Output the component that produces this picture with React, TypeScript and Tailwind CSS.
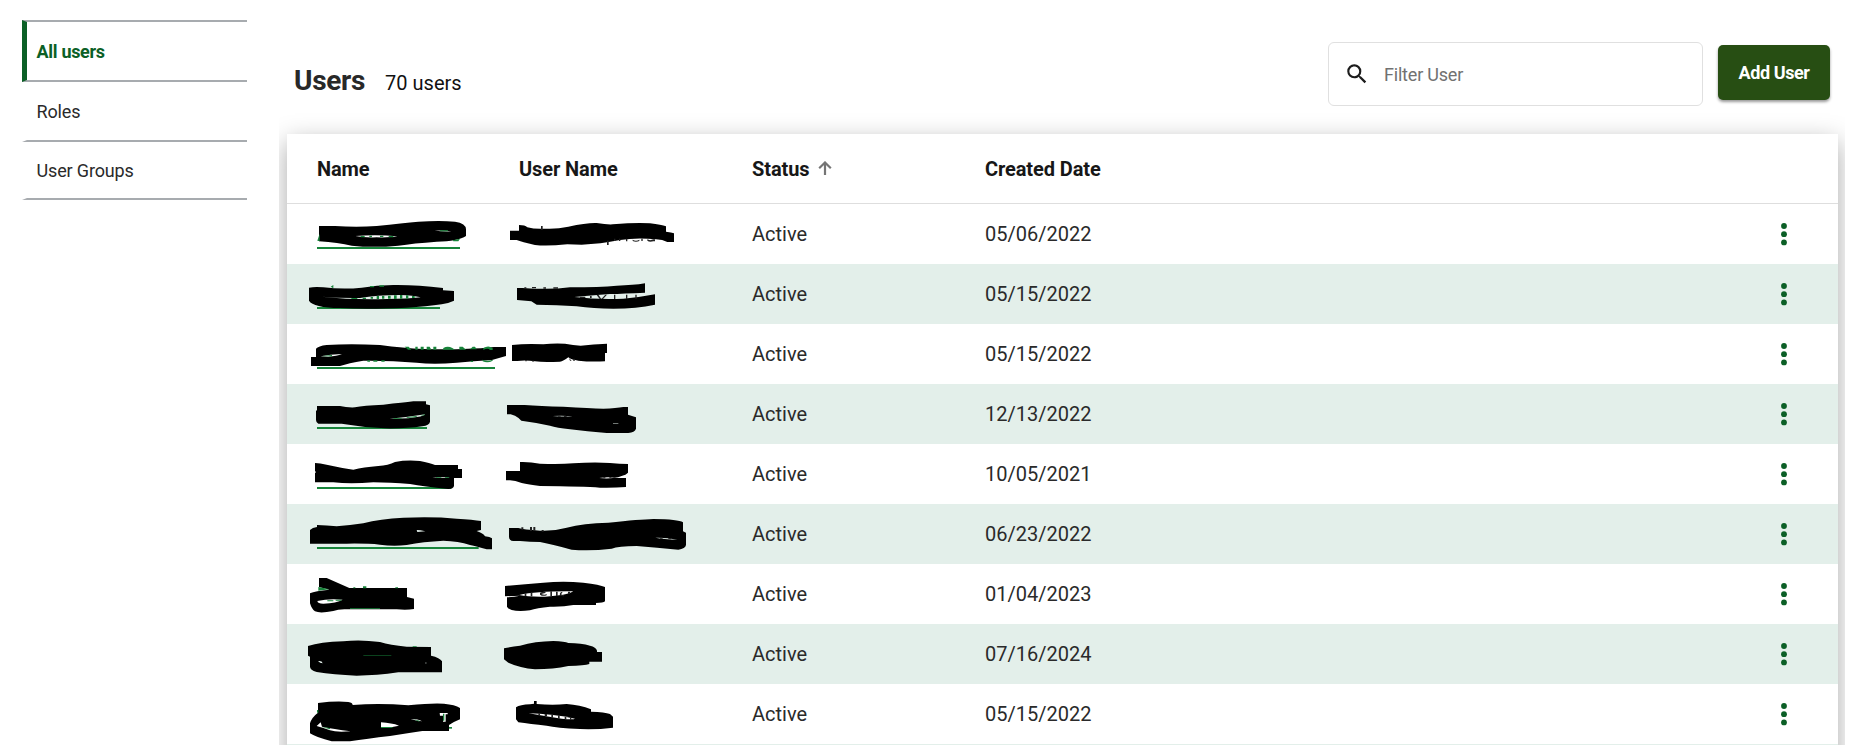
import React from "react";

type Row = {
  date: string;
  offset: number;
  underline: string;
  name: string;
  user: string;
  nameGaps: string;
  userGaps: string;
  tint: string;
  dark: string;
};

// Coordinates use three units per pixel; offset is the top edge of each row.
const rows: Row[] = [
  {
    date: "05/06/2022", offset: 12, underline: "M81 141H510V147H81Z",
    name: "M87 78H135Q200 83 260 78Q340 69 385 65Q450 61 495 65Q528 70 528 88V108Q505 124 440 125Q370 130 325 137Q250 144 185 137Q145 128 87 124Z",
    user: "M660 92H687V75Q705 75 712 82Q735 88 765 86Q800 88 835 80Q890 68 920 69Q950 74 968 73Q1040 67 1080 70Q1115 75 1128 79V95Q1145 97 1152 100V126H1132Q1118 118 1098 118Q1040 112 990 120Q930 132 875 134L832 133Q770 139 735 135Q695 126 680 120H660Z",
    nameGaps: "M196 108Q260 103 322 109Q300 113 260 112Q220 113 196 108ZM434 92Q460 90 484 94Q462 95 434 92Z",
    userGaps: "",
    tint: "M82 122L89 101V124ZM212 108h12v4h-12ZM238 107h8v4h-8ZM270 107h10v4h-10ZM296 108h14v4h-14ZM450 91h24v3h-24ZM488 121L510 116L505 124H490Z",
    dark: "M753 78h5v12h-5ZM951 122h5v13h-5ZM972 116h4v7h-4ZM987 116h4v7h-4ZM1008 116h4v8h-4ZM1028 119q10 6 20 0v4q-10 5-20 0ZM1054 116h4v7h-4ZM1072 118q8 5 18 0h5v6h-5q-12 3-18-2Z",
  },
  {
    date: "05/15/2022", offset: 192, underline: "M81 321H450V327H81Z",
    name: "M57 263Q75 259 100 262Q160 269 215 263Q260 256 310 255Q380 254 459 264V271L492 273V302Q475 310 455 313Q410 320 350 323Q230 329 150 324Q70 323 57 302Z",
    user: "M681 264H698Q780 270 840 262Q930 262 980 257Q1030 256 1065 250V278Q1000 281 960 282Q900 286 853 291Q930 300 1000 296Q1050 292 1095 283V314Q1040 326 970 326Q910 326 860 319Q800 314 740 314L724 304L681 300Z",
    nameGaps: "M94 290Q150 295 210 294Q260 285 330 285Q370 286 392 292Q350 297 290 297Q190 300 94 290Z",
    userGaps: "",
    tint: "M122 260L130 255V265ZM240 258h12v4h-12ZM268 256h14v4h-14ZM184 294h18v3h-18ZM218 293h10v4h-10ZM242 291h7v5h-7ZM260 288h7v9h-7ZM276 288h7v8h-7ZM294 287h8v9h-8ZM312 286h8v11h-8ZM330 285h7v11h-7ZM348 286h7v10h-7ZM366 288h8v6h-8Z",
    dark: "M703 262h6v4h-6ZM726 261h12v4h-12ZM760 262h8v4h-8ZM790 262h14v4h-14ZM870 290h16v4h-16ZM900 288h5v6h-5ZM920 285h6l8 12h-5ZM946 284h5l-12 13h-5ZM972 284h4v13h-4ZM1008 284h4v13h-4ZM1036 284h4v12h-4Z",
  },
  {
    date: "05/15/2022", offset: -18, underline: "M81 111H615V117H81Z",
    name: "M78 56Q85 48 110 45Q180 40 270 45Q340 54 400 57Q480 59 520 57Q580 55 612 51H648V78L606 90Q550 93 500 98Q430 104 380 98Q300 91 220 92Q175 99 150 108H63V81H78Z",
    user: "M666 45Q710 40 760 43Q790 39 825 41Q850 46 872 47Q910 43 951 41V69H945V94Q900 96 865 92Q845 90 835 82Q820 94 810 95Q760 98 735 94Q705 89 682 93H666Z",
    nameGaps: "M92 79Q120 73 156 72Q140 79 115 80Z",
    userGaps: "",
    tint: "M98 78l28-3v4h-28ZM344 50h12l8 9h-10ZM376 50h7v9h-7ZM392 50h9v9h-9ZM410 50h9l5 9h-14ZM430 50h9v9h-9ZM460 54q13-8 27 0l8 5h-36ZM508 50h10l10 9h-20ZM542 56l6-6h7l5 8h-20ZM580 54q15-9 28 0v6h-8q-6-8-20 0ZM232 91h8v4h-8ZM250 91h12v4h-12ZM274 91h10v4h-10ZM542 92h7v4h-7ZM578 89q15 6 30 0v3q-14 8-30 2Z",
    dark: "M706 90h4v4h-4ZM727 91h4v4h-4ZM837 84l8 8h-5ZM850 86h4v7h-4Z",
  },
  {
    date: "12/13/2022", offset: 162, underline: "M81 291H411V297H81Z",
    name: "M81 228H150Q170 233 195 232Q220 226 280 224Q340 218 370 214H408V223L420 226V275Q418 286 397 289Q350 296 285 295Q220 292 155 281H85Q78 278 78 270V243L81 240Z",
    user: "M651 225H704Q750 229 820 230Q900 235 940 236Q980 235 1000 231H1014V254L1038 262V296Q1034 307 1015 309H950Q890 304 840 298Q800 293 780 287Q740 278 694 272Q685 262 675 257L662 253H651Z",
    nameGaps: "M299 266Q350 262 406 253Q402 260 355 265Q320 267 299 266Z",
    userGaps: "M788 258Q820 256 848 259Q820 261 788 258ZM969 280h16v1.5h-16Z",
    tint: "M310 265h25v2h-25ZM350 262l30-4v3l-30 3ZM390 257l14-4v3Z",
    dark: "M804 257h8v3h-8ZM822 258h8v3h-8Z",
  },
  {
    date: "10/05/2021", offset: -48, underline: "M81 81H484V87H81Z",
    name: "M75 9Q90 9 110 14Q150 23 190 29Q220 22 265 18Q295 16 315 6Q350-1 390 3Q420 9 435 15H504V27H516V54H492V78Q490 87 475 87Q400 79 360 72Q300 67 250 67Q180 73 130 67H75V40Q80 35 75 34Z",
    user: "M690 6Q720 5 750 11Q810 13 850 10Q910 6 960 9Q990 12 1014 12V38Q1007 45 997 47Q985 52 970 54H1008V81Q970 84 930 83Q880 79 750 78Q715 74 695 69Q675 62 660 61H648V33H690Z",
    nameGaps: "M427 52Q455 50 480 54Q453 55 427 52Z",
    userGaps: "M928 54Q950 50 975 53Q952 57 928 54Z",
    tint: "M438 51h16v2h-16ZM465 52h12v2h-12Z",
    dark: "M940 52h6v3h-6ZM958 52h6v3h-6Z",
  },
  {
    date: "06/23/2022", offset: 132, underline: "M81 261H566V267H81Z",
    name: "M60 210Q67 203 81 201V195Q110 196 140 199Q180 196 220 190Q270 176 340 173Q430 169 500 176Q550 179 573 183V210L560 213Q580 220 585 229Q600 230 606 235V268H590Q560 259 540 255Q505 243 460 242Q400 245 350 255Q310 260 270 254Q230 250 170 251H60Z",
    user: "M657 204H685Q700 209 750 212Q790 214 830 203Q880 189 955 188Q1050 178 1090 177Q1165 178 1179 187V214L1188 218V255Q1186 266 1165 269Q1100 263 1040 258Q985 259 965 266Q900 274 845 269Q790 254 750 246Q720 246 690 243H670Q657 242 657 230Z",
    nameGaps: "M380 210Q390 210 406 214L382 216Z",
    userGaps: "M1096 233Q1130 232 1162 239Q1120 238 1096 233Z",
    tint: "",
    dark: "M694 202h6v7h-6ZM720 201h6v12h-6ZM730 201h6v12h-6ZM755 210h6v5h-6ZM1110 232h8v4h-8ZM1135 234h8v4h-8Z",
  },
  {
    date: "01/04/2023", offset: 312, underline: "",
    name: "M87 354H110L178 384H351V411L372 416V447Q350 451 320 448H170Q145 447 130 453Q90 461 75 454Q65 447 60 430V400Q75 393 118 389L87 381Z",
    user: "M645 378Q700 373 760 368Q820 363 880 368Q930 374 945 381V424Q940 429 918 429V435H850Q820 441 780 440Q740 444 720 451Q685 455 665 450Q654 447 651 440V412Q672 411 690 407L645 409Z",
    nameGaps: "M82 423Q115 415 158 419Q140 429 100 431Q83 431 82 423Z",
    userGaps: "M688 405Q740 393 850 394Q830 407 765 410Q715 411 688 405Z",
    tint: "M85 381L118 388L85 392ZM190 382h6v3h-6ZM219 379h10v6h-10ZM316 382h8v3h-8ZM112 421h18v3h-18ZM137 419h17v3h-17ZM180 445h90v2h-90Z",
    dark: "M704 400h5v9h-5ZM722 397h5v12h-5ZM750 398q12-5 18 0l-14 4q10 4 16 0v4q-12 4-20-2ZM781 394h5v15h-5ZM798 395h5v13h-5ZM818 397q-10 9 4 9v3q-20-1-9-13ZM834 395h6v7h-6Z",
  },
  {
    date: "07/16/2024", offset: 102, underline: "",
    name: "M54 168Q90 156 160 154Q210 148 270 156Q300 165 350 170L423 171V197Q450 203 456 214V247H325Q260 257 200 257Q130 254 80 246Q60 240 60 230V200L54 197Z",
    user: "M642 175Q665 170 690 167Q735 154 790 153Q825 155 835 159Q875 160 900 167Q918 171 921 182V186H936V215H898V222Q885 227 835 228Q790 238 735 238Q690 234 655 218L642 208Z",
    nameGaps: "M84 213Q96 211 98 220Q90 220 84 213ZM405 218h5v2h-5Z",
    userGaps: "",
    tint: "M220 196h84v1h-84ZM368 169h12v2h-12Z",
    dark: "",
  },
  {
    date: "05/15/2022", offset: 282, underline: "M460 411H486V416H460Z",
    name: "M84 339Q140 332 175 336Q188 338 188 345Q270 339 355 346Q430 338 462 341Q495 344 510 354V388Q490 396 477 405V423H397Q350 430 300 438Q230 446 180 454H125Q80 443 60 430V400Q65 382 84 368Z",
    user: "M678 352Q690 344 720 343L732 341V333H740V342Q790 346 830 342Q870 345 903 358V365Q945 366 960 372L969 380V413Q920 419 870 417Q800 414 770 407Q720 402 685 397L678 388Z",
    nameGaps: "M80 408L92 397L96 410Q130 417 182 424Q140 428 120 421Q100 413 80 408ZM273 397Q305 399 327 407Q300 414 273 413ZM362 387Q385 387 396 394Q378 393 362 387ZM449 369H473V373H467V395H459V377H450Z",
    userGaps: "M716 370Q780 371 855 386Q850 389 815 386Q760 378 716 370Z",
    tint: "M81 360h4v8h-4ZM94 411l26 3v4ZM273 411h38l-8 3h-30ZM370 388l18 4v3ZM459 371h4v21h-4Z",
    dark: "M745 370h5v7h-5ZM764 372h7v7h-7ZM784 374h5v9h-5ZM804 376h5v10h-5ZM824 380h5v8h-5ZM840 382h4v7h-4Z",
  },
];

function UserRow({ row, shaded }: { row: Row; shaded: boolean }) {
  const gap = shaded ? "#e3efea" : "#fff";
  return (
    <div className={shaded ? "flex h-[60px] items-center bg-[#e3efea] pl-[3px]" : "flex h-[60px] items-center bg-white pl-[3px]"}>
      <svg className="h-[60px] w-[213px] shrink-0 overflow-visible" viewBox={`0 ${row.offset} 639 180`}>
        <path d={row.underline} fill="#17843a" />
        <path d={row.name} fill="#000" />
        <path d={row.nameGaps} fill={gap} />
        <path d={row.tint} fill="#17843a" />
      </svg>
      <svg className="h-[60px] w-[249px] shrink-0 overflow-visible" viewBox={`639 ${row.offset} 747 180`}>
        <path d={row.user} fill="#000" />
        <path d={row.userGaps} fill={gap} />
        <path d={row.dark} fill="#222" />
      </svg>
      <div className="w-[233px] shrink-0">Active</div>
      <div className="flex-1">{row.date}</div>
      <button className="mr-[42px] flex h-6 w-[24px] items-center justify-center" aria-label="Row actions">
        <svg className="h-[24px] w-[8px]" viewBox="0 0 8 24" fill="#0b5f26">
          <circle cx="4" cy="4" r="2.9" />
          <circle cx="4" cy="12.2" r="2.9" />
          <circle cx="4" cy="20.4" r="2.9" />
        </svg>
      </button>
    </div>
  );
}

export default function App() {
  return (
    <div className="flex h-[745px] w-[1864px] overflow-hidden bg-white font-['Roboto',sans-serif] text-[#2a2a2a]">
      <nav className="ml-[22px] mt-[20px] w-[225px] shrink-0 text-[18px]">
        <a className="flex h-[62px] items-center border-y-2 border-l-[5px] border-y-[#a7abaf] border-l-[#0b6026] pl-[9.5px] pt-px font-bold tracking-[-0.3px] text-[#0b6026]">All users</a>
        <a className="flex h-[60px] items-center border-b-2 border-l-[5px] border-b-[#a7abaf] border-l-transparent pl-[9.5px] tracking-[-0.15px]">Roles</a>
        <a className="flex h-[58px] items-center border-b-2 border-l-[5px] border-b-[#a7abaf] border-l-transparent pl-[9.5px] tracking-[-0.15px]">User Groups</a>
      </nav>
      <main className="ml-[32px] h-[745px] w-[1566px] shrink-0 overflow-hidden pl-[8px] pr-[7px]">
        <header className="flex h-[134px] items-start">
          <h1 className="ml-[7px] mt-[62px] text-[28px] font-bold leading-[38px] tracking-[-0.3px] text-[#282828]">Users</h1>
          <span className="ml-[20px] mt-[68px] text-[20px] leading-[30px] text-[#111]">70 users</span>
          <label className="ml-auto mt-[42px] flex h-[64px] w-[375px] items-center rounded-[6px] border border-[#e0e0e0] pl-[15px]">
            <svg className="size-[26px]" viewBox="0 0 24 24" fill="#1c1c1c">
              <path d="M15.5 14h-.79l-.28-.27A6.47 6.47 0 0 0 16 9.5 6.5 6.5 0 1 0 9.5 16c1.61 0 3.09-.59 4.23-1.57l.27.28v.79l5 4.99L20.49 19l-4.99-5zm-6 0C7.01 14 5 11.99 5 9.5S7.01 5 9.5 5 14 7.01 14 9.5 11.99 14 9.5 14z" />
            </svg>
            <span className="ml-[14px] text-[18px] tracking-[-0.2px] text-[#717171]">Filter User</span>
          </label>
          <button className="ml-[15px] mr-[8px] mt-[45px] h-[55px] w-[112px] rounded-[5px] bg-[#274e13] text-[18px] font-bold tracking-[-0.4px] text-white shadow-[0_2px_3px_rgba(0,0,0,0.4)]">Add User</button>
        </header>
        <section className="h-[640px] w-[1551px] bg-white text-[20px] shadow-[0_8px_24px_rgba(0,0,0,0.34)]">
          <div className="flex h-[70px] items-center border-b border-[#dedede] pl-[30px] pt-px font-bold tracking-[-0.1px] text-[#171717]">
            <div className="w-[202px]">Name</div>
            <div className="w-[233px]">User Name</div>
            <div className="flex w-[233px] items-center">
              Status
              <svg className="-mt-[2px] ml-[9px] size-[14px]" viewBox="0 0 14 14" fill="none" stroke="#757575" strokeWidth="2.2">
                <path d="M7 14V1.5M1.2 7.2L7 1.5L12.8 7.2" />
              </svg>
            </div>
            <div>Created Date</div>
          </div>
          {rows.map((row, i) => (
            <UserRow key={i} row={row} shaded={i % 2 === 1} />
          ))}
          <div className="h-[60px] bg-[#e3efea]" />
        </section>
      </main>
    </div>
  );
}
